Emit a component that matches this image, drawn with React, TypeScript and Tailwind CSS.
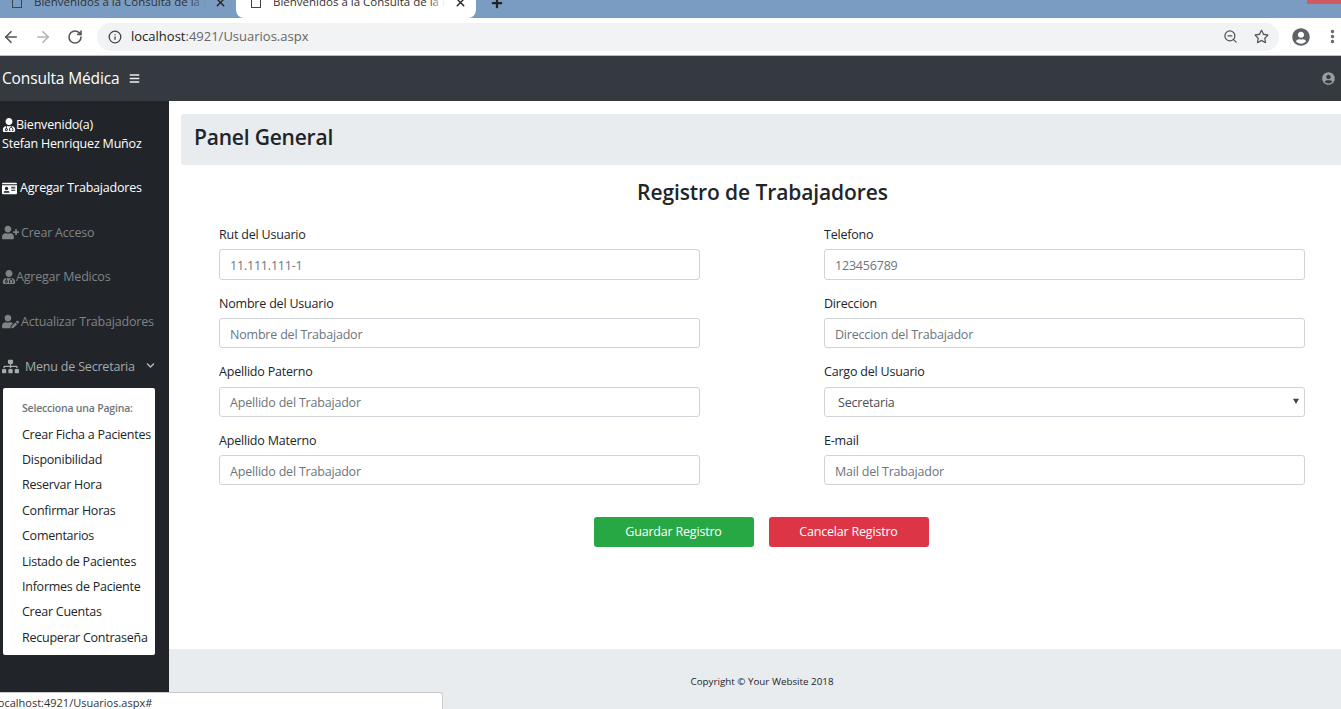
import { FaBars, FaChevronDown, FaIdCard, FaPlus, FaSitemap, FaUserCircle, FaUserEdit, FaUserPlus, FaUserMd, FaRegStar } from "react-icons/fa";
import { ArrowLeft, ArrowRight, EllipsisVertical, Info, RotateCw, X, ZoomOut } from "lucide-react";

const font = "font-['Open_Sans','Noto_Sans',sans-serif]";

function Field({ label, placeholder }: { label: string; placeholder: string }) {
  return (
    <div className="flex h-[68.6px] flex-col">
      <label className="h-[23.4px] text-[12.5px] leading-[18px] tracking-[-0.2px] text-[#212529]">{label}</label>
      <input
        placeholder={placeholder}
        className="h-[30.2px] w-full rounded-[3px] border border-[#ced4da] bg-white px-[10px] pt-[2px] text-[12.5px] tracking-[-0.2px] outline-none placeholder:text-[#6c757d]"
      />
    </div>
  );
}

function Tab({ active }: { active?: boolean }) {
  return (
    <div className={`flex h-[18px] items-center overflow-hidden ${active ? "w-[240px] rounded-b-[8px] bg-white pl-[15px] pr-[9px]" : "w-[236px] rounded-br-[8px] bg-[#7a9cc2] pl-[12px] pr-[9px]"}`}>
      <div className="mr-[12px] h-[14px] w-[10px] shrink-0 -translate-y-[8px] border border-[#444]" />
      <div className="relative w-[172px] shrink-0 -translate-y-[7px] overflow-hidden whitespace-nowrap text-[11.5px] leading-[14px] text-[#333]">
        Bienvenidos a la Consulta de la Dra
        <div className={`absolute inset-y-0 right-0 w-[16px] bg-gradient-to-r from-transparent ${active ? "to-white" : "to-[#7a9cc2]"}`} />
      </div>
      <X className="ml-auto -translate-y-[7px] text-[#222]" size={13} strokeWidth={2.5} />
    </div>
  );
}

const secretaria = ["Crear Ficha a Pacientes", "Disponibilidad", "Reservar Hora", "Confirmar Horas", "Comentarios", "Listado de Pacientes", "Informes de Paciente", "Crear Cuentas", "Recuperar Contraseña"];

export default function App() {
  return (
    <div className={`${font} relative flex h-[709px] w-[1341px] flex-col overflow-hidden bg-white`}>
      {/* browser tabs */}
      <div className="flex h-[18px] shrink-0 items-start bg-[#7a9cc2]">
        <Tab />
        <Tab active />
        <FaPlus className="ml-[15px] -translate-y-[3px] text-[#222]" size={12} />
        <div className="ml-auto h-[4px] w-[34px] bg-[#cf5a5f]" />
      </div>
      {/* toolbar */}
      <div className="flex h-[38px] shrink-0 items-center border-b border-[#bdbdbd] bg-white">
        <ArrowLeft className="ml-[2px] text-[#555]" size={18} strokeWidth={2.2} />
        <ArrowRight className="ml-[14px] text-[#b5b5b5]" size={18} strokeWidth={2.2} />
        <RotateCw className="ml-[15px] text-[#555]" size={16} strokeWidth={2.4} />
        <div className="ml-[14px] flex h-[28px] w-[1182px] items-center rounded-full bg-[#f1f3f4] pl-[11px] pr-[10px]">
          <Info size={14} className="text-[#444]" strokeWidth={2.2} />
          <span className="ml-[9px] text-[13px] text-[#222]">localhost<span className="text-[#666]">:4921/Usuarios.aspx</span></span>
          <ZoomOut className="ml-auto text-[#555]" size={15} strokeWidth={2} />
          <FaRegStar className="ml-[16px] text-[#555]" size={15} />
        </div>
        <FaUserCircle className="ml-[13px] text-[#5f6368]" size={18} />
        <EllipsisVertical className="ml-[14px] text-[#5f6368]" size={17} strokeWidth={2.8} />
      </div>
      {/* app navbar */}
      <div className="flex h-[45px] shrink-0 items-center bg-[#343a40] pl-[2px] pr-[6px]">
        <span className="text-[15.5px] tracking-[-0.15px] text-white">Consulta Médica</span>
        <FaBars className="ml-[10px] text-[#eee]" size={11} />
        <FaUserCircle className="ml-auto text-[#9a9da0]" size={13} />
      </div>
      <div className="flex min-h-0 flex-1">
        {/* sidebar */}
        <aside className="flex w-[169px] shrink-0 flex-col bg-[#212529] text-[12.5px] tracking-[-0.2px]">
          <div className="mt-[14px] pl-[2px] leading-[19px] text-white">
            <div className="flex items-center"><FaUserMd size={14} />Bienvenido(a)</div>
            <div>Stefan Henriquez Muñoz</div>
          </div>
          <div className="mt-[26px] flex h-[45px] flex-col">
            <div className="flex items-center gap-[3px] pl-[2px] leading-[18px] text-white"><FaIdCard size={15} />Agregar Trabajadores</div>
          </div>
          <div className="flex h-[44px] items-start gap-[2px] pl-[2px] leading-[18px] text-[#7f8386]"><FaUserPlus size={17} />Crear Acceso</div>
          <div className="flex h-[45px] items-start pl-[2px] leading-[18px] text-[#7f8386]"><FaUserMd size={14} className="mt-[2px]" />Agregar Medicos</div>
          <div className="flex h-[45px] items-start gap-[2px] pl-[2px] leading-[18px] text-[#7f8386]"><FaUserEdit size={17} />Actualizar Trabajadores</div>
          <div className="flex h-[30px] items-start pl-[2px] leading-[18px] text-[#a7a9ab]">
            <FaSitemap size={17} className="mr-[6px]" />Menu de Secretaria
            <FaChevronDown size={9} className="ml-[11px] mt-[3px] text-[#b5b7b8]" />
          </div>
          <div className="ml-[3px] w-[152px] rounded-[2px] bg-white pb-[1px] pl-[19px] pt-[12.7px]">
            <div className="mb-[10px] text-[10.5px] font-semibold leading-[15px] text-[#6c757d]">Selecciona una Pagina:</div>
            {secretaria.map((item) => (
              <div key={item} className="h-[25.4px] whitespace-nowrap text-[12.5px] leading-[18px] tracking-[-0.25px] text-[#212529]">{item}</div>
            ))}
          </div>
        </aside>
        {/* main */}
        <main className="flex min-w-0 flex-1 flex-col">
          <div className="flex-1 pt-[13px]">
            <div className="ml-[12px] flex h-[51px] items-center rounded-l-[3px] bg-[#e9ecef] pb-[4px] pl-[13px]">
              <h2 className="text-[21px] font-semibold tracking-[-0.2px] text-[#212529]">Panel General</h2>
            </div>
            <h3 className="mt-[11px] pl-[15px] text-center text-[21px] font-semibold leading-[32px] tracking-[-0.1px] text-[#212529]">Registro de Trabajadores</h3>
            <div className="mt-[18px] grid grid-cols-[481px_481px] gap-x-[124px] pl-[50px]">
              <div>
                <Field label="Rut del Usuario" placeholder="11.111.111-1" />
                <Field label="Nombre del Usuario" placeholder="Nombre del Trabajador" />
                <Field label="Apellido Paterno" placeholder="Apellido del Trabajador" />
                <Field label="Apellido Materno" placeholder="Apellido del Trabajador" />
              </div>
              <div>
                <Field label="Telefono" placeholder="123456789" />
                <Field label="Direccion" placeholder="Direccion del Trabajador" />
                <div className="flex h-[68.6px] flex-col">
                  <label className="h-[23.4px] text-[12.5px] leading-[18px] tracking-[-0.2px] text-[#212529]">Cargo del Usuario</label>
                  <div className="flex h-[30.2px] items-center justify-between rounded-[3px] border border-[#ced4da] bg-white pl-[13px] pr-[5px] pt-[3px] text-[12.5px] tracking-[-0.2px] text-[#495057]">
                    Secretaria
                    <svg width="6" height="6" viewBox="0 0 7 7" className="-translate-y-[2px]"><path d="M0 1h7L3.5 7z" fill="#444" /></svg>
                  </div>
                </div>
                <Field label="E-mail" placeholder="Mail del Trabajador" />
              </div>
            </div>
            <div className="mt-[17px] flex justify-center gap-[15px] pl-[12px]">
              <button className="h-[30px] w-[160px] rounded-[3px] bg-[#28a745] text-[12.5px] tracking-[-0.2px] text-white">Guardar Registro</button>
              <button className="h-[30px] w-[160px] rounded-[3px] bg-[#dc3545] text-[12.5px] tracking-[-0.2px] text-white">Cancelar Registro</button>
            </div>
          </div>
          <footer className="flex h-[60px] shrink-0 items-center justify-center bg-[#e9ecef] pl-[14px] pt-[6px] text-[9.8px] text-[#212529]">Copyright © Your Website 2018</footer>
        </main>
      </div>
      {/* link preview bubble */}
      <div className="absolute bottom-0 left-0 flex h-[17px] w-[443px] items-center rounded-tr-[3px] border-r border-t border-[#ccc] bg-white pt-[4px] text-[11px] text-[#333]">
        <span className="-ml-[5px]">localhost:4921/Usuarios.aspx#</span>
      </div>
    </div>
  );
}
